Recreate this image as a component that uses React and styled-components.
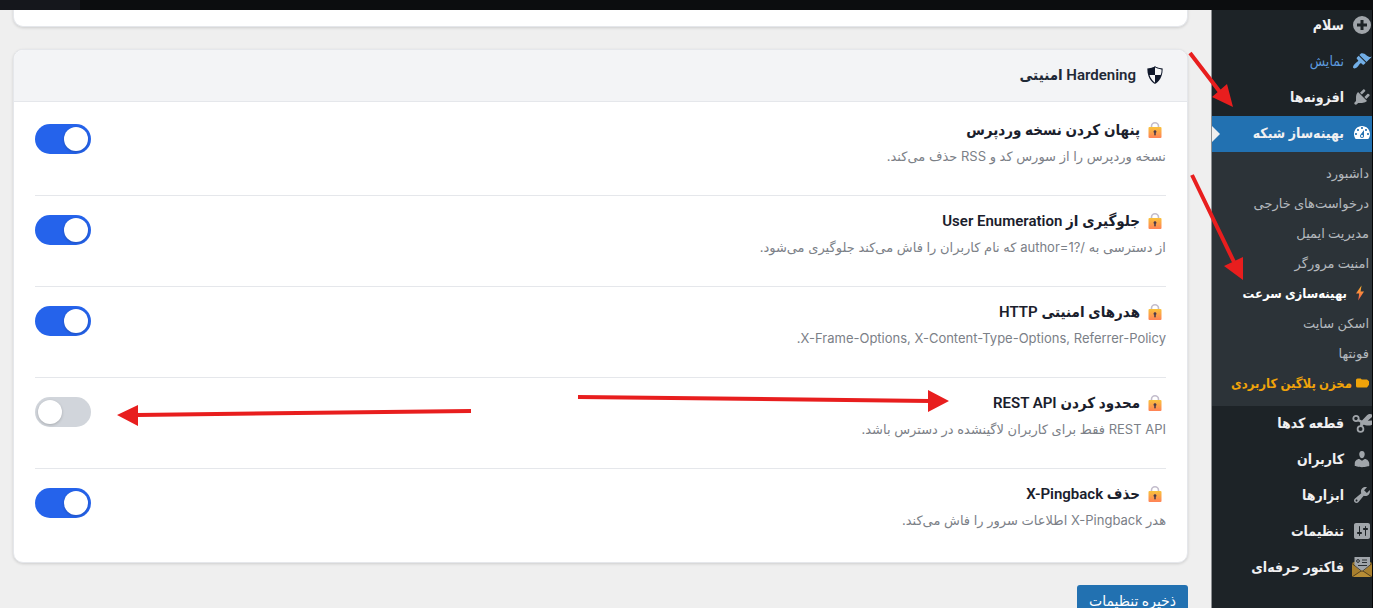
import React from 'react'
import styled, { createGlobalStyle } from 'styled-components'

const GlobalStyle = createGlobalStyle`
* {
	box-sizing: border-box;
}
body {
	margin: 0;
	background: #efefef;
	font-family: Roboto, "DejaVu Sans", sans-serif;
	overflow: hidden;
}
`;

const condensed = 'Roboto, "DejaVu Sans Condensed", "DejaVu Sans", sans-serif';

const Page = styled.div`
position: relative;
height: 100vh;
overflow: hidden;
direction: rtl;
`;

const TopBar = styled.header`
position: absolute;
top: 0;
left: 0;
right: 0;
z-index: 2;
height: 10px;
background: linear-gradient(to right, #15171c 80px, #0c0d0f 80px);
`;

const Layout = styled.div`
display: flex;
min-height: 100%;
`;

const Sidebar = styled.nav`
flex: 0 0 162px;
padding-top: 8px;
background: #1d2327;
border-right: 1px solid #050607;
border-left: 1px solid #8c8f92;
overflow: hidden;
`;

const MenuList = styled.ul`
margin: 0;
padding: 0;
list-style: none;
`;

const MenuLink = styled.a`
position: relative;
display: flex;
align-items: center;
gap: 8px;
height: 36px;
padding-bottom: 2px;
font-family: ${condensed};
font-size: 14px;
font-weight: ${(p) => (p.$hover ? 400 : 600)};
white-space: nowrap;
text-decoration: none;
color: ${(p) => (p.$hover ? '#5c9ade' : '#f0f0f1')};
background: ${(p) => (p.$active ? '#2271b1' : 'transparent')};
&::after {
	content: '';
	display: ${(p) => (p.$active ? 'block' : 'none')};
	position: absolute;
	left: 0;
	top: 10px;
	border: 8px solid transparent;
	border-right-width: 0;
	border-left-color: #efefef;
}
svg {
	flex: none;
	width: 20px;
	height: 20px;
	fill: ${(p) => (p.$active ? '#fff' : p.$hover ? '#72aee6' : '#a0a5aa')};
}
`;

const SubMenu = styled.ul`
margin: 0;
padding: 6px 3px 8px 0;
list-style: none;
background: #2c3338;
`;

const SubLink = styled.a`
display: flex;
align-items: center;
gap: ${(p) => (p.$strong === 'gold' ? '4px' : '8px')};
padding-right: ${(p) => (p.$strong === 'white' ? '4px' : '0')};
height: 30px;
font-family: ${(p) => (p.$strong ? condensed : 'inherit')};
font-size: 13px;
font-weight: ${(p) => (p.$strong ? 700 : 400)};
white-space: nowrap;
text-decoration: none;
color: ${(p) => (p.$strong === 'gold' ? '#f0a30a' : p.$strong ? '#fff' : '#b4b9be')};
svg {
	flex: none;
}
`;

const Main = styled.main`
flex: 1;
min-width: 0;
padding: 0 23px 0 13px;
`;

const Card = styled.section`
margin-bottom: 22px;
background: #fff;
border: 1px solid #e5e7eb;
border-radius: 10px;
box-shadow: 0 1px 3px rgba(0, 0, 0, 0.14);
overflow: hidden;
`;

const PreviousCard = styled(Card)`
height: 27px;
border-top: 0;
border-top-left-radius: 0;
border-top-right-radius: 0;
`;

const CardHeader = styled.div`
display: flex;
align-items: center;
gap: 8px;
height: 52px;
padding: 0 21px 2px;
background: #f3f4f6;
border-bottom: 1px solid #e5e7eb;
svg {
	width: 22px;
	height: 22px;
	fill: #0f172a;
}
`;

const CardTitle = styled.h2`
margin: 0;
font-family: ${condensed};
font-size: 15px;
font-weight: 600;
line-height: 24px;
color: #1f2937;
`;

const CardBody = styled.div`
padding: 3px 21px;
`;

const Row = styled.div`
display: flex;
justify-content: space-between;
align-items: flex-start;
padding: 12px 0 28px;
border-bottom: 1px solid #e5e7eb;
&:last-child {
	border-bottom: 0;
}
`;

const RowTitle = styled.label`
display: flex;
align-items: center;
gap: 8px;
padding-right: 4px;
font-family: ${condensed};
font-size: 15px;
font-weight: 600;
line-height: 26px;
color: #1a202c;
`;

const RowText = styled.p`
margin: 2px 0 0;
font-family: Inter, "DejaVu Sans", sans-serif;
font-size: 13px;
line-height: 22px;
color: #7b8087;
`;

const Toggle = styled.input`
appearance: none;
direction: ltr;
flex: none;
width: 56px;
height: 30px;
margin: 7px 0 0;
padding: 3px;
border-radius: 15px;
background: #d1d5db;
cursor: pointer;
&::before {
	content: '';
	display: block;
	width: 24px;
	height: 24px;
	border-radius: 50%;
	background: #fff;
	box-shadow: 0 1px 3px rgba(0, 0, 0, 0.2);
}
&:checked {
	background: #2563eb;
}
&:checked::before {
	margin-left: auto;
}
`;

const SaveButton = styled.button`
height: 32px;
padding: 0 12px;
border: 0;
border-radius: 3px;
background: #2271b1;
color: #fff;
font-family: inherit;
font-size: 14px;
line-height: 30px;
cursor: pointer;
`;

const Arrows = styled.svg`
position: absolute;
top: 0;
left: 0;
z-index: 3;
pointer-events: none;
`;

const LockIcon = () => (
    <svg width="14" height="16" viewBox="0 0 14 16">
        <defs>
            <linearGradient id="lock" x1="0" y1="0" x2="0" y2="1">
                <stop offset="0" stopColor="#f9c23c" />
                <stop offset="1" stopColor="#ff8257" />
            </linearGradient>
        </defs>
        <path d="M3.5 7V4.200a3.500 3.400 0 0 1 7 0V7" fill="none" stroke="#c3bdcc" strokeWidth="1.600" />
        <rect x="0.500" y="5" width="13" height="11" rx="1" fill="url(#lock)" />
        <path d="M7 8.200a1.400 1.400 0 0 1 .8 2.600v2a.8.8 0 0 1-1.600 0v-2A1.400 1.400 0 0 1 7 8.200z" fill="#4b3a4a" />
    </svg>
)

const BoltIcon = () => (
    <svg width="10" height="16" viewBox="0 0 10 16">
        <defs>
            <linearGradient id="bolt" x1="0" y1="0" x2="0" y2="1">
                <stop offset="0" stopColor="#ffb92e" />
                <stop offset="1" stopColor="#f4564c" />
            </linearGradient>
        </defs>
        <path d="M6.500 0.500L1 8.500h3.200L3.200 15.500 9 6.600H5.600z" fill="url(#bolt)" />
    </svg>
)

const FolderIcon = () => (
    <svg width="13" height="10" viewBox="0 0 13 10" fill="#f0a30a">
        <path d="M1.500 0.500h3.200l1 1h5.300L13 3.200v3.600L11 9.500H1.500A1.500 1.500 0 0 1 0 8V2A1.500 1.500 0 0 1 1.500 .5z" />
    </svg>
)

const ShieldIcon = () => (
    <svg viewBox="0 0 20 20">
        <path d="M10 2s3 2 7 2c0 11-7 14-7 14S3 15 3 4c4 0 7-2 7-2zm0 8h5s1-1 1-5c0 0-5-1-6-2v7H5c1 4 5 7 5 7v-7z" />
    </svg>
)

const icons = {
    plus: <path fillRule="evenodd" d="M10 1a9 9 0 1 0 0 18 9 9 0 0 0 0-18zM8.5 5h3v3.5H15v3h-3.500V15h-3v-3.500H5v-3h3.500z" />,
    brush: <path d="M14.480 11.060L7.410 3.990l1.500-1.500c.5-.56 2.300-.47 3.510.32 1.210.8 1.430 1.280 2.910 2.100 1.180.64 2.450 1.260 4.450.85zm-.71.71L6.700 4.700 4.930 6.470c-.39.39-.39 1.020 0 1.410l1.060 1.060c.39.39.39 1.030 0 1.420-.6.6-1.430 1.110-2.210 1.690-.35.26-.7.53-1.010.84C1.430 14.230.4 16.080 1.400 17.070c.99 1 2.840-.03 4.180-1.360.31-.31.58-.66.85-1.020.57-.78 1.080-1.610 1.690-2.210.39-.39 1.020-.39 1.410 0l1.060 1.060c.39.39 1.020.39 1.410 0z" />,
    plug: <path d="M13.110 4.360L9.870 7.600 8 5.730l3.240-3.240c.35-.34 1.050-.2 1.560.32.52.51.66 1.210.31 1.550zm-8 1.770l.91-1.120 9.010 9.010-1.190.84c-.71.71-2.630 1.160-3.820 1.160H6.140L4.900 17.260c-.59.59-1.540.59-2.120 0-.59-.58-.59-1.530 0-2.120l1.240-1.240v-3.880c0-1.130.4-3.190 1.090-3.890zm7.260 3.970l3.240-3.240c.34-.35 1.040-.21 1.550.31.52.51.66 1.210.31 1.550l-3.240 3.250z" />,
    gauge: <path d="M3.760 16h12.480c1.100-1.370 1.760-3.110 1.760-5 0-4.420-3.580-8-8-8s-8 3.580-8 8c0 1.890.66 3.630 1.760 5zM10 4c.55 0 1 .45 1 1s-.45 1-1 1-1-.45-1-1 .45-1 1-1zM6 6c.55 0 1 .45 1 1s-.45 1-1 1-1-.45-1-1 .45-1 1-1zm8 0c.55 0 1 .45 1 1s-.45 1-1 1-1-.45-1-1 .45-1 1-1zm-5.370 5.550L12 7v6c0 1.100-.9 2-2 2s-2-.9-2-2c0-.57.24-1.080.63-1.450zM4 10c.55 0 1 .45 1 1s-.45 1-1 1-1-.45-1-1 .45-1 1-1zm12 0c.55 0 1 .45 1 1s-.45 1-1 1-1-.45-1-1 .45-1 1-1zm-5 3c0-.55-.45-1-1-1s-1 .45-1 1 .45 1 1 1 1-.45 1-1z" />,
    scissors: (
        <g>
            <circle cx="4" cy="5.500" r="2.700" fill="none" stroke="#a0a5aa" strokeWidth="1.800" />
            <circle cx="8.500" cy="16" r="2.900" fill="none" stroke="#a0a5aa" strokeWidth="1.800" />
            <path d="M6 5.800l4 1.700L15 2.200c1.500-1.500 4-1.500 5-.7v2.500L12 11l-2 3-2-.5L8.200 9.500 5 7.800zM11 8L20 7.500v4.200c-3 1.500-6 1-9.500-.7z" />
        </g>
    ),
    users: <path d="M10 9.250c-2.270 0-2.730-3.440-2.730-3.440C7 4.020 7.820 2 9.970 2c2.160 0 2.980 2.020 2.710 3.810 0 0-.41 3.440-2.680 3.440zm0 2.570L12.720 10c2.390 0 4.520 2.330 4.520 4.530v2.490s-3.650 1.130-7.240 1.130c-3.650 0-7.240-1.130-7.240-1.130v-2.490c0-2.250 1.940-4.480 4.470-4.480z" />,
    wrench: <path d="M16.680 9.770c-1.340 1.340-3.300 1.670-4.950.99l-5.410 6.520c-.99.99-2.590.99-3.580 0s-.99-2.590 0-3.570l6.520-5.420c-.68-1.650-.35-3.610.99-4.950 1.280-1.280 3.120-1.620 4.720-1.060l-2.890 2.890 2.820 2.820 2.860-2.870c.53 1.580.18 3.390-1.080 4.650zM3.810 16.210c.4.39 1.040.39 1.430 0 .4-.4.4-1.040 0-1.430-.39-.4-1.030-.4-1.430 0-.39.39-.39 1.030 0 1.430z" />,
    sliders: <path d="M18 16V4c0-1.100-.9-2-2-2H4c-1.100 0-2 .9-2 2v12c0 1.100.9 2 2 2h12c1.100 0 2-.9 2-2zM8 11h1c.55 0 1 .45 1 1s-.45 1-1 1H8v1.500c0 .28-.22.5-.5.5s-.5-.22-.5-.5V13H6c-.55 0-1-.45-1-1s.45-1 1-1h1V5.500c0-.28.22-.5.5-.5s.5.22.5.5V11zm5-2h-1c-.55 0-1-.45-1-1s.45-1 1-1h1V5.500c0-.28.22-.5.5-.5s.5.22.5.5V7h1c.55 0 1 .45 1 1s-.45 1-1 1h-1v5.500c0 .28-.22.5-.5.5s-.5-.22-.5-.5V9z" />,
    envelope: (
        <g>
            <path d="M0 6l10-5 10 5v14H0z" fill="#9a762c" />
            <path d="M2.500 0h15.500V12L10 16 2.500 11z" fill="#a0a5aa" />
            <circle cx="6" cy="4" r="1.400" fill="none" stroke="#2b3035" strokeWidth="1" />
            <path d="M10 3h5M10 5.500h5M6 8.500h9" stroke="#2b3035" strokeWidth="1" />
            <path d="M0 6.500l9 8-9 5.500zM20 6.500l-9 8 9 5.500z" fill="#a87f2d" />
            <path d="M0 20l10-7 10 7z" fill="#b88d35" />
            <path d="M0 6.500l10 8 10-8M0 20l9-6M20 20l-9-6" fill="none" stroke="#3b2f1a" strokeWidth="0.800" />
        </g>
    ),
}

const topMenu = [
    { label: 'سلام', icon: 'plus' },
    { label: 'نمایش', icon: 'brush', hover: true },
    { label: 'افزونه‌ها', icon: 'plug' },
    { label: 'بهینه‌ساز شبکه', icon: 'gauge', active: true },
]

const subMenu = [
    { label: 'داشبورد' },
    { label: 'درخواست‌های خارجی' },
    { label: 'مدیریت ایمیل' },
    { label: 'امنیت مرورگر' },
    { label: 'بهینه‌سازی سرعت', strong: 'white', icon: <BoltIcon /> },
    { label: 'اسکن سایت' },
    { label: 'فونتها' },
    { label: 'مخزن پلاگین کاربردی', strong: 'gold', icon: <FolderIcon /> },
]

const bottomMenu = [
    { label: 'قطعه کدها', icon: 'scissors' },
    { label: 'کاربران', icon: 'users' },
    { label: 'ابزارها', icon: 'wrench' },
    { label: 'تنظیمات', icon: 'sliders' },
    { label: 'فاکتور حرفه‌ای', icon: 'envelope' },
]

const settings = [
    { id: 'hide-version', title: 'پنهان کردن نسخه وردپرس', text: 'نسخه وردپرس را از سورس کد و RSS حذف می‌کند.', on: true },
    { id: 'user-enum', title: 'جلوگیری از User Enumeration', text: 'از دسترسی به /?author=1 که نام کاربران را فاش می‌کند جلوگیری می‌شود.', on: true },
    { id: 'http-headers', title: 'هدرهای امنیتی HTTP', text: 'X-Frame-Options, X-Content-Type-Options, Referrer-Policy.', on: true },
    { id: 'rest-api', title: 'محدود کردن REST API', text: 'REST API فقط برای کاربران لاگینشده در دسترس باشد.', on: false },
    { id: 'x-pingback', title: 'حذف X-Pingback', text: 'هدر X-Pingback اطلاعات سرور را فاش می‌کند.', on: true },
]

function MenuItem({ item, children }) {
    return (
        <li>
            <MenuLink href="#" $active={item.active} $hover={item.hover}>
                <svg viewBox="0 0 20 20">{icons[item.icon]}</svg>
                {item.label}
            </MenuLink>
            {children}
        </li>
    )
}

function App() {
    return (
        <Page>
            <GlobalStyle />
            <TopBar />
            <Layout>
                <Sidebar>
                    <MenuList>
                        {topMenu.map((item) => (
                            <MenuItem key={item.label} item={item}>
                                {item.active && (
                                    <SubMenu>
                                        {subMenu.map((sub) => (
                                            <li key={sub.label}>
                                                <SubLink href="#" $strong={sub.strong}>
                                                    {sub.icon}
                                                    {sub.label}
                                                </SubLink>
                                            </li>
                                        ))}
                                    </SubMenu>
                                )}
                            </MenuItem>
                        ))}
                        {bottomMenu.map((item) => (
                            <MenuItem key={item.label} item={item} />
                        ))}
                    </MenuList>
                </Sidebar>
                <Main>
                    <PreviousCard />
                    <Card>
                        <CardHeader>
                            <ShieldIcon />
                            <CardTitle>Hardening امنیتی</CardTitle>
                        </CardHeader>
                        <CardBody>
                            {settings.map((s) => (
                                <Row key={s.id}>
                                    <div>
                                        <RowTitle htmlFor={s.id}>
                                            <LockIcon />
                                            {s.title}
                                        </RowTitle>
                                        <RowText>{s.text}</RowText>
                                    </div>
                                    <Toggle type="checkbox" id={s.id} defaultChecked={s.on} />
                                </Row>
                            ))}
                        </CardBody>
                    </Card>
                    <SaveButton type="button">ذخیره تنظیمات</SaveButton>
                </Main>
            </Layout>
            <Arrows width="1373" height="608" viewBox="0 0 1373 608" fill="#e81e1e" stroke="#e81e1e">
                <path d="M1190 53L1220 92M1192 175L1234 262M578 397L930 401M471 411L137 415" strokeWidth="4" />
                <path d="M1233 107L1227 84 1212 97zM1243 280L1243 257 1224 266zM949 401L928 390 928 412zM117 415L138 405 138 426z" stroke="none" />
            </Arrows>
        </Page>
    )
}

export default App
